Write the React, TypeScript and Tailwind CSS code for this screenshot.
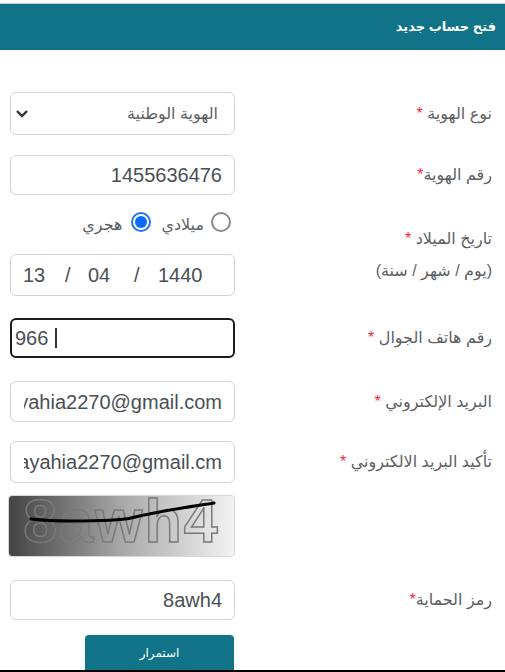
export default function App() {
  const inputBox = "w-[225px] rounded-[6px] border border-[#d4d4d4] bg-white text-[#4a4f55] text-[20px] outline-none";
  const labelCls = "flex-1 text-[16px] text-[#5c5f63] leading-[24px] text-right";
  const star = <span className="text-[#f0293e]">*</span>;
  return (
    <div dir="ltr" className="w-[505px] h-[672px] overflow-hidden bg-white flex flex-col font-['Liberation_Sans','DejaVu_Sans',Arial,sans-serif]">
      <div className="mt-[3px] h-[47px] border-t border-[#c8d0d2] bg-[#117387] flex items-center justify-end pr-[9px] shrink-0">
        <h1 dir="rtl" className="text-white text-[13px] font-bold">فتح حساب جديد</h1>
      </div>

      <div className="pl-[10px] pr-[13px] mt-[42px] flex items-center h-[43px]">
        <div className="w-[225px] h-[43px] rounded-[6px] border border-[#d4d4d4] bg-white flex items-center justify-between pl-[4px] pr-[16px] text-[#5c5f63] text-[16px]">
          <svg width="14" height="10" viewBox="0 0 14 10" fill="none" stroke="#333" strokeWidth="2.4"><path d="M2 2l5 5 5-5" /></svg>
          <span dir="rtl">الهوية الوطنية</span>
        </div>
        <div dir="rtl" className={labelCls}>نوع الهوية {star}</div>
      </div>

      <div className="pl-[10px] pr-[13px] mt-[20px] flex items-center h-[40px]">
        <div className={`${inputBox} h-[40px] flex items-center justify-end pr-[12px]`}>1455636476</div>
        <div dir="rtl" className={labelCls}>رقم الهوية{star}</div>
      </div>

      <div className="pl-[10px] pr-[13px] mt-[17px] flex items-start h-[84px]">
        <div className="w-[225px] flex flex-col">
          <div dir="rtl" className="h-[25px] flex items-start pr-[4px] text-[16px] leading-[26px] text-[#5c5f63]">
            <span className="w-[20px] h-[20px] rounded-full border-2 border-[#8a8a8a] bg-white shrink-0" />
            <span className="mr-[7px]">ميلادي</span>
            <span className="mr-[10px] w-[20px] h-[20px] rounded-full border-2 border-[#1a75ff] flex items-center justify-center shrink-0">
              <span className="w-[12px] h-[12px] rounded-full bg-[#0a6cff]" />
            </span>
            <span className="mr-[9px]">هجري</span>
          </div>
          <div className="mt-[17px] h-[42px] rounded-[6px] border border-[#d4d4d4] flex items-center pl-[12px] text-[20px] text-[#4a4f55]">
            <span className="w-[42px]">13</span>
            <span className="w-[23px]">/</span>
            <span className="w-[46px]">04</span>
            <span className="w-[24px]">/</span>
            <span>1440</span>
          </div>
        </div>
        <div dir="rtl" className="flex-1 mt-[11px] text-[16px] text-[#5c5f63] leading-[32px] text-right">
          <div>تاريخ الميلاد {star}</div>
          <div>(يوم / شهر / سنة)</div>
        </div>
      </div>

      <div className="pl-[10px] pr-[13px] mt-[22px] flex items-center h-[40px]">
        <div className="w-[225px] h-[40px] rounded-[6px] border-2 border-[#1c1c1c] bg-white text-[20px] text-[#4a4f55] flex items-center pl-[3px] gap-[7px]">
          <span>966</span>
          <span className="w-[2px] h-[20px] bg-[#333]" />
        </div>
        <div dir="rtl" className={labelCls}>رقم هاتف الجوال {star}</div>
      </div>

      <div className="pl-[10px] pr-[13px] mt-[23px] flex items-center h-[41px]">
        <div className={`${inputBox} h-[41px] flex items-center justify-end pr-[12px] overflow-hidden`}>
          <span className="w-[198px] overflow-hidden whitespace-nowrap flex justify-end shrink-0">ayahia2270@gmail.com</span>
        </div>
        <div dir="rtl" className={labelCls}>البريد الإلكتروني {star}</div>
      </div>

      <div className="pl-[10px] pr-[13px] mt-[19px] flex items-center h-[42px]">
        <div className={`${inputBox} h-[42px] flex items-center justify-end pr-[12px] overflow-hidden`}>
          <span className="w-[198px] overflow-hidden whitespace-nowrap flex justify-end shrink-0">mayahia2270@gmail.cm</span>
        </div>
        <div dir="rtl" className={labelCls}>تأكيد البريد الالكتروني {star}</div>
      </div>

      <div className="pl-[8px] mt-[12px]">
        <div className="relative w-[227px] h-[62px] rounded-[4px] border border-[#d8d8d8] overflow-hidden bg-gradient-to-r from-[#444444] via-[#a8a8a8] to-[#f4f4f4] flex items-center justify-center pb-[10px]">
          <span className="text-[61px] leading-[48px] font-bold tracking-[2px] text-transparent [-webkit-text-stroke:1.5px_#7a7a7a] font-['Liberation_Sans',sans-serif]">8awh4</span>
          <svg className="absolute inset-0" width="227" height="62" viewBox="0 0 227 62" fill="none">
            <path d="M22 23C40 25 50 25 62 25 C85 25 110 25 122 22 C150 15 180 11 205 7" stroke="#000" strokeWidth="3" strokeLinecap="round" />
          </svg>
        </div>
      </div>

      <div className="pl-[10px] pr-[13px] mt-[23px] flex items-center h-[40px]">
        <div className={`${inputBox} h-[40px] flex items-center justify-end pr-[12px]`}>8awh4</div>
        <div dir="rtl" className={labelCls}>رمز الحماية{star}</div>
      </div>

      <div className="pl-[85px] mt-[15px]">
        <button className="w-[149px] h-[35px] rounded-t-[4px] bg-[#117387] text-white text-[12px] flex items-center justify-center">
          <span dir="rtl">استمرار</span>
        </button>
      </div>
      <div className="h-[2px] bg-black shrink-0" />
    </div>
  );
}
